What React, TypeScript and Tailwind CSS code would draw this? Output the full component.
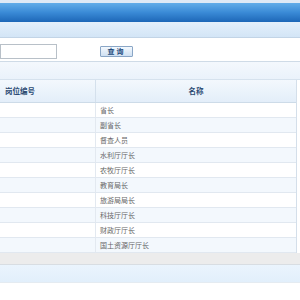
const rows = ['省长', '副省长', '督查人员', '水利厅厅长', '农牧厅厅长', '教育局长', '旅游局局长', '科技厅厅长', '财政厅厅长', '国土资源厅厅长']

export default function App() {
  return (
    <div className="w-[300px] h-[300px] overflow-hidden bg-white" style={{ fontFamily: '"Noto Sans CJK SC", "Noto Sans", sans-serif' }}>
      {/* top strip */}
      <div className="h-[3px] bg-[#dfeaf6]" />
      {/* blue title bar */}
      <div className="h-[19px] bg-gradient-to-b from-[#62ade9] via-[#3a8ad6] to-[#1d67b7]" />
      {/* light band */}
      <div className="h-[16px] bg-gradient-to-b from-[#e4f0fb] to-[#d3e5f6] border-b border-[#c2d4e6]" />
      {/* search row */}
      <div className="h-[24px] flex items-center border-b border-[#cfdbe7]">
        <div className="w-[57px] h-[15px] mt-[4px] bg-white border border-[#b8c0c8]" />
        <button className="ml-[43px] mt-[4px] w-[33px] h-[11px] flex items-center justify-center border border-[#8aa6c6] rounded-[1px] bg-gradient-to-b from-[#f4f9fe] to-[#cfe0f2] text-[7px] leading-none text-[#20487a] font-bold tracking-[2px]">
          查询
        </button>
      </div>
      {/* light band */}
      <div className="h-[18px] bg-gradient-to-b from-[#f4f8fd] to-[#eaf2fb] border-b border-[#d6e2ee]" />
      {/* table */}
      <div className="w-[297px] border-r border-[#d4dfea]">
        <div className="h-[23px] flex bg-gradient-to-b from-[#f3f8fd] to-[#e3eef9] border-b border-[#cddbe8]">
          <div className="w-[96px] border-r border-[#d4e0ec] flex items-center pl-[5px] text-[7.5px] font-bold text-[#2c4a72]">岗位编号</div>
          <div className="flex-1 flex items-center justify-center text-[7.5px] font-bold text-[#2c4a72]">名称</div>
        </div>
        {rows.map((r, i) => (
          <div key={r} className={`h-[15px] flex border-b border-[#e1e8f0] ${i % 2 === 1 ? 'bg-[#f3f8fd]' : 'bg-white'}`}>
            <div className="w-[96px] border-r border-[#e3e9f0]" />
            <div className="flex-1 flex items-center pl-[4px] text-[7px] text-[#666666]">{r}</div>
          </div>
        ))}
      </div>
      {/* footer */}
      <div className="h-[12px] bg-[#ececec] border-b border-[#d8dde2]" />
      <div className="h-[18px] bg-gradient-to-b from-[#eaf4fd] to-[#e2effb] border-b border-[#e4ebf1]" />
    </div>
  )
}
